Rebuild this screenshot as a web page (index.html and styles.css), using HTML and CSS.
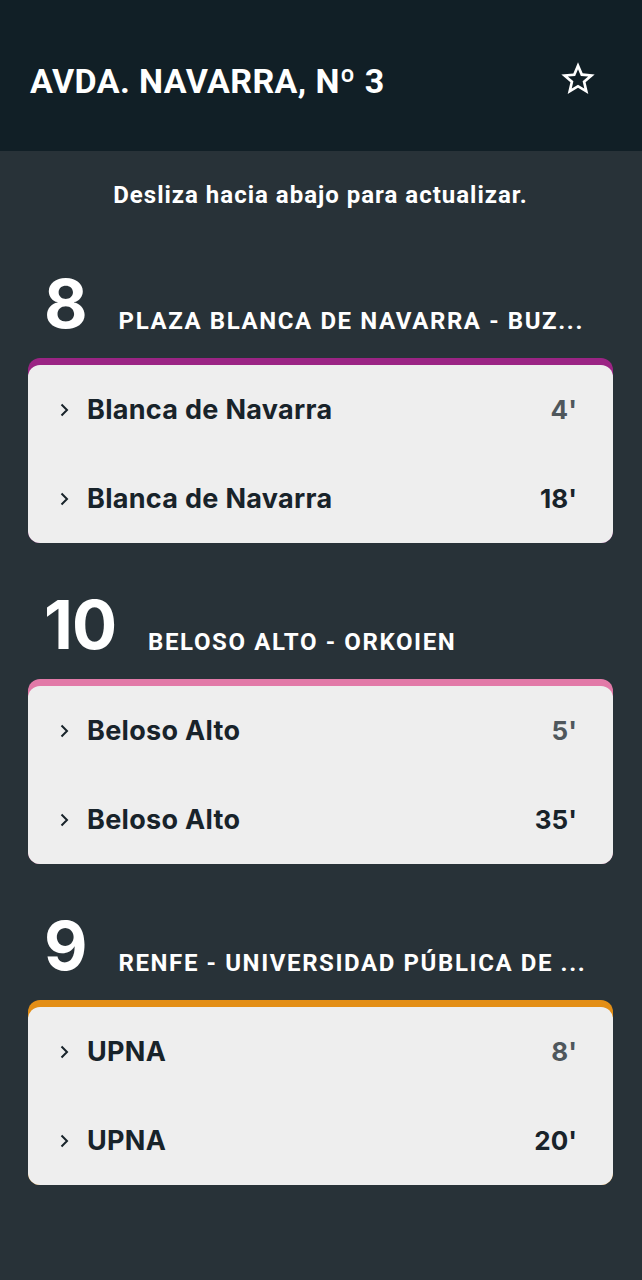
FILE: index.html
```html
<!DOCTYPE html>
<html lang="es">
<head>
<meta charset="utf-8">
<title>Avda. Navarra, Nº 3</title>
<link rel="stylesheet" href="styles.css">
</head>
<body>
<header class="topbar">
  <h1 class="stop-title">AVDA. NAVARRA, Nº 3</h1>
  <button class="fav" aria-label="Favorito">
    <svg viewBox="0 0 24 24" width="40" height="40"><path fill="#ffffff" d="M22 9.24l-7.19-.62L12 2 9.19 8.63 2 9.24l5.46 4.73L5.82 21 12 17.27 18.18 21l-1.63-7.03L22 9.24zM12 15.4l-3.76 2.27 1-4.28-3.32-2.88 4.38-.38L12 6.1l1.71 4.04 4.38.38-3.32 2.88 1 4.28L12 15.4z"/></svg>
  </button>
</header>
<main class="content">
  <p class="hint">Desliza hacia abajo para actualizar.</p>

  <section class="line">
    <div class="line-head"><span class="line-num">8</span><span class="line-name">PLAZA BLANCA DE NAVARRA - BUZ...</span></div>
    <div class="card card-purple">
      <div class="card-body">
        <div class="row"><svg class="chev" viewBox="0 0 9 14" width="9" height="14"><path d="M1.5 1.5 7 7l-5.5 5.5" fill="none" stroke="#18232a" stroke-width="2"/></svg><span class="dest">Blanca de Navarra</span><span class="time time-soon">4'</span></div>
        <div class="row"><svg class="chev" viewBox="0 0 9 14" width="9" height="14"><path d="M1.5 1.5 7 7l-5.5 5.5" fill="none" stroke="#18232a" stroke-width="2"/></svg><span class="dest">Blanca de Navarra</span><span class="time">18'</span></div>
      </div>
    </div>
  </section>

  <section class="line">
    <div class="line-head"><span class="line-num">10</span><span class="line-name">BELOSO ALTO - ORKOIEN</span></div>
    <div class="card card-pink">
      <div class="card-body">
        <div class="row"><svg class="chev" viewBox="0 0 9 14" width="9" height="14"><path d="M1.5 1.5 7 7l-5.5 5.5" fill="none" stroke="#18232a" stroke-width="2"/></svg><span class="dest">Beloso Alto</span><span class="time time-soon">5'</span></div>
        <div class="row"><svg class="chev" viewBox="0 0 9 14" width="9" height="14"><path d="M1.5 1.5 7 7l-5.5 5.5" fill="none" stroke="#18232a" stroke-width="2"/></svg><span class="dest">Beloso Alto</span><span class="time">35'</span></div>
      </div>
    </div>
  </section>

  <section class="line">
    <div class="line-head"><span class="line-num">9</span><span class="line-name">RENFE - UNIVERSIDAD PÚBLICA DE ...</span></div>
    <div class="card card-orange">
      <div class="card-body">
        <div class="row"><svg class="chev" viewBox="0 0 9 14" width="9" height="14"><path d="M1.5 1.5 7 7l-5.5 5.5" fill="none" stroke="#18232a" stroke-width="2"/></svg><span class="dest">UPNA</span><span class="time time-soon">8'</span></div>
        <div class="row"><svg class="chev" viewBox="0 0 9 14" width="9" height="14"><path d="M1.5 1.5 7 7l-5.5 5.5" fill="none" stroke="#18232a" stroke-width="2"/></svg><span class="dest">UPNA</span><span class="time">20'</span></div>
      </div>
    </div>
  </section>
</main>
</body>
</html>
```

FILE: styles.css
```css
html, body {
  margin: 0;
  padding: 0;
}

body {
  background: #283238;
  font-family: Roboto, "Liberation Sans", sans-serif;
  color: #ffffff;
  min-height: 1280px;
}

.topbar {
  height: 151px;
  box-sizing: border-box;
  background: #111f26;
  display: flex;
  align-items: center;
  justify-content: space-between;
  padding: 0 44px 0 30px;
}

.stop-title {
  margin: 0;
  font-family: Roboto, "Liberation Sans", sans-serif;
  font-weight: 700;
  font-size: 34px;
  line-height: 40px;
  letter-spacing: 0.4px;
  padding-top: 10px;
  color: #ffffff;
}

.fav {
  border: 0;
  background: none;
  padding: 0;
  margin-top: 6px;
  width: 40px;
  height: 40px;
  display: flex;
}

.content {
  padding: 0 29px 60px 28px;
}

.hint {
  margin: 0;
  padding-top: 29px;
  text-align: center;
  font-weight: 700;
  font-size: 24px;
  line-height: 30px;
  letter-spacing: 1px;
  color: #ffffff;
}

.line {
  margin-top: 48px;
}

.line:first-of-type {
  margin-top: 60px;
}

.line-head {
  display: flex;
  align-items: baseline;
  gap: 32px;
  padding-left: 16px;
  margin-bottom: 20px;
  height: 68px;
}

.line-num {
  font-family: Inter, Lato, sans-serif;
  font-weight: 700;
  font-size: 67px;
  line-height: 68px;
  font-variant-numeric: proportional-nums;
  letter-spacing: -1px;
  color: #ffffff;
}

.line-name {
  font-family: Roboto, "Liberation Sans", sans-serif;
  font-weight: 700;
  font-size: 24px;
  line-height: 30px;
  letter-spacing: 1.6px;
  color: #ffffff;
  white-space: nowrap;
  position: relative;
  top: 1px;
}

.card {
  border-radius: 12px;
  padding-top: 7px;
}

.card-purple { background: #9b2484; }
.card-pink { background: #e27aa8; }
.card-orange { background: #e38e16; }

.card-body {
  background: #eeeeee;
  border-radius: 12px;
}

.row {
  height: 89px;
  display: flex;
  align-items: center;
  padding: 0 36px 0 32px;
}

.chev {
  flex: none;
  margin-right: 18px;
}

.dest {
  flex: 1;
  font-family: Inter, Lato, sans-serif;
  font-weight: 700;
  font-size: 27px;
  letter-spacing: 0.3px;
  color: #18232a;
}

.time {
  font-family: Inter, Lato, sans-serif;
  font-weight: 700;
  font-size: 26px;
  color: #18232a;
}

.time-soon {
  color: #4f575c;
}
```
